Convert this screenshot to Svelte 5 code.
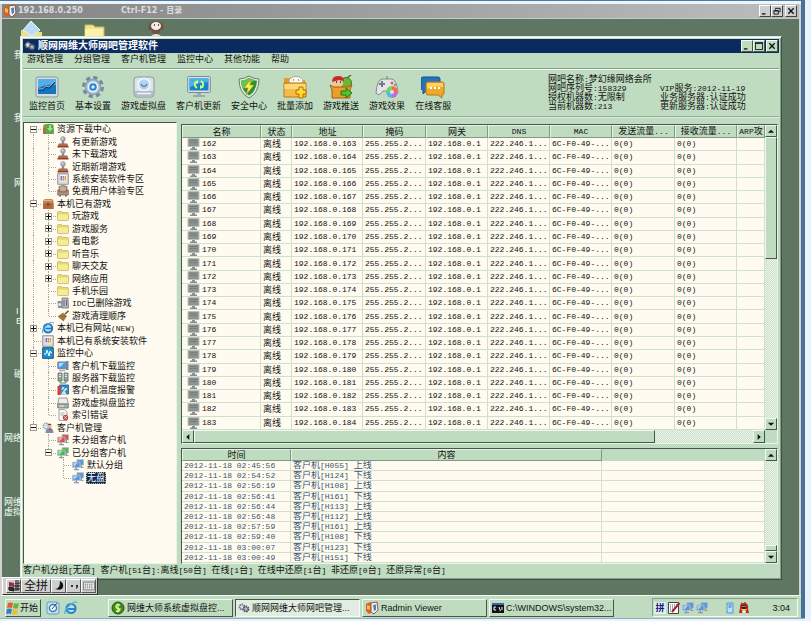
<script>
  const menus = ['游戏管理', '分组管理', '客户机管理', '监控中心', '其他功能', '帮助'];
  const tools = [
    ['chart', '监控首页'], ['gear', '基本设置'], ['disk', '游戏虚拟盘'], ['refresh', '客户机更新'],
    ['shield', '安全中心'], ['addbox', '批量添加'], ['push', '游戏推送'], ['pad', '游戏效果'], ['chat', '在线客服']
  ];
  // Guide codes: | line, T branch, L last branch, + closed, - open, ^ first open, = last open, _ blank
  const tree = [
    ['^', 'boxgreen', '资源下载中心'],
    ['|T', 'stamp', '有更新游戏'],
    ['|T', 'stamp', '未下载游戏'],
    ['|T', 'stamp', '近期新增游戏'],
    ['|T', 'soft', '系统安装软件专区'],
    ['|L', 'chair', '免费用户体验专区'],
    ['-', 'boxbrown', '本机已有游戏'],
    ['|+', 'folder', '玩游戏'],
    ['|+', 'folder', '游戏服务'],
    ['|+', 'folder', '看电影'],
    ['|+', 'folder', '听音乐'],
    ['|+', 'folder', '聊天交友'],
    ['|+', 'folder', '网络应用'],
    ['|T', 'folder', '手机乐园'],
    ['|T', 'trash', 'IDC已删除游戏'],
    ['|L', 'broom', '游戏清理顺序'],
    ['+', 'ie', '本机已有网站(NEW)'],
    ['T', 'soft', '本机已有系统安装软件'],
    ['-', 'wave', '监控中心'],
    ['|T', 'pc', '客户机下载监控'],
    ['|T', 'server', '服务器下载监控'],
    ['|T', 'alarm', '客户机温度报警'],
    ['|T', 'drive', '游戏虚拟盘监控'],
    ['|L', 'page', '索引错误'],
    ['=', 'users', '客户机管理'],
    ['_T', 'netred', '未分组客户机'],
    ['_=', 'netgreen', '已分组客户机'],
    ['__T', 'netblue', '默认分组'],
    ['__L', 'netblue', '无盘']
  ];
  const columns = ['名称', '状态', '地址', '掩码', '网关', 'DNS', 'MAC', '发送流量...', '接收流量...', 'ARP攻'];
  const widths = [79, 31, 71, 63, 62, 62, 62, 63, 62];
  const clients = Array.from({ length: 22 }, (_, i) => 162 + i);
  const logs = [
    ['2012-11-18 02:45:56', 'H055', '上线'],
    ['2012-11-18 02:54:52', 'H124', '下线'],
    ['2012-11-18 02:56:19', 'H108', '上线'],
    ['2012-11-18 02:56:41', 'H161', '下线'],
    ['2012-11-18 02:56:44', 'H113', '上线'],
    ['2012-11-18 02:56:48', 'H112', '上线'],
    ['2012-11-18 02:57:59', 'H161', '上线'],
    ['2012-11-18 02:59:40', 'H108', '下线'],
    ['2012-11-18 03:00:07', 'H123', '下线'],
    ['2012-11-18 03:00:49', 'H151', '下线']
  ];
  const desk = [
    [14, 48, '我'], [14, 111, '我'], [14, 176, '网'], [16, 304, 'I'], [16, 314, 'E'],
    [14, 367, '磁'], [4, 431, '网络'], [4, 495, '网维'], [4, 505, '虚拟']
  ];
  const runs = (s) => s.match(/[\x20-\x7e]+|[^\x20-\x7e]+/g) ?? [];
  let selected = $state('无盘');
</script>

{#snippet mix(s)}{#each runs(s) as r}{#if /^[\x20-\x7e]/.test(r)}<span class="m">{r}</span>{:else}{r}{/if}{/each}{/snippet}

{#snippet glyph(kind)}
  <svg class="g" viewBox="0 0 9 9" aria-hidden="true">
    {#if kind === 'min'}<path d="M1 7h4v1.5H1z" />
    {:else if kind === 'max'}<path d="M.5 1h8v7.5h-8z" fill="none" stroke="#111" /><path d="M0 .5h9V2H0z" />
    {:else if kind === 'restore'}<path d="M3 1.5h5v4H7M3 1v2M1 4h5v4H1zM1 4.5h5" fill="none" stroke="#111" />
    {:else if kind === 'close'}<path d="M1.5 1.5l6 6m0-6l-6 6" stroke="#111" stroke-width="1.5" />
    {:else if kind === 'up'}<path d="M1 6.500h7L4.500 3z" />
    {:else if kind === 'down'}<path d="M1 3h7L4.500 6.500z" />
    {:else if kind === 'left'}<path d="M6 1v7L2.500 4.500z" />
    {:else if kind === 'right'}<path d="M3 1v7l3.500-3.500z" />{/if}
  </svg>
{/snippet}

{#snippet small(kind)}
  <svg class="i12" viewBox="0 0 12 12" aria-hidden="true">
    {#if kind === 'folder'}
      <path d="M.5 2.500q0-1 1-1h3l1 1h5q1 0 1 1v6q0 1-1 1h-9q-1 0-1-1z" fill="#e6d66c" stroke="#c4b25a" stroke-width=".7" />
      <path d="M1 4.500h10V10H1z" fill="#f5ec98" />
    {:else if kind === 'stamp'}
      <circle cx="6" cy="3" r="2.300" fill="#a9afb6" stroke="#70757c" stroke-width=".6" /><circle cx="5.400" cy="2.400" r=".8" fill="#eef" />
      <path d="M5 5h2l.5 3h-3z" fill="#8c8c90" /><path d="M2 7.500h8l1 1v2H1v-2z" fill="#b5694b" /><path d="M.5 10h11v1.500H.5z" fill="#844530" />
    {:else if kind === 'soft'}
      <path d="M.7.7h10.600v10.600H.7z" fill="#dcdcdc" stroke="#95959b" /><path d="M3 2.200h6.500v6H3z" fill="#fff" />
      <path d="M3.500 3H5v4.500H3.500z" fill="#7c6cd0" /><path d="M5.500 3H7v2H5.500z" fill="#e0705c" /><path d="M5.500 5.500H7v2H5.500z" fill="#53a943" /><path d="M7.500 3H9v4.500H7.500z" fill="#cfa448" />
    {:else if kind === 'chair'}
      <path d="M2 1.500q4-2 8 0V7H2z" fill="#c7a996" stroke="#6f5a50" stroke-width=".7" />
      <path d="M.7 5h2v2h6.600V5h2v5H9.500v1.300h-1V10h-5v1.300h-1V10H.7z" fill="#b29382" stroke="#6f5a50" stroke-width=".7" />
    {:else if kind === 'boxgreen' || kind === 'boxbrown'}
      <path d="M1 4q0-3 3-3h5q2.500 0 2.500 3v7H1z" fill="#c78551" /><path d="M1 5h10.500v6H1z" fill="#b06a40" />
      {#if kind === 'boxgreen'}<path d="M3 2l4-1 4.500 1v8.500H4z" fill="#4fae48" /><path d="M5 5h2V2h2v3h2L8 8.500z" fill="#9de486" />
      {:else}<path d="M6 4.500v4M4.500 6.500h3.500" stroke="#7c3f22" /><path d="M2 2.500h8" stroke="#e5b289" />{/if}
    {:else if kind === 'trash'}
      <path d="M5 1h6l.5 10H5z" fill="#b5b8bc" stroke="#63676d" stroke-width=".7" /><path d="M7 3v6M9.500 3v6" stroke="#6c7077" />
      <path d="M.5 4H5v7H1z" fill="#8e9298" /><circle cx="2.800" cy="7.500" r="1.500" fill="#e4e6e9" />
    {:else if kind === 'broom'}
      <path d="M11.500.8L8 4" stroke="#7c5430" stroke-width="1.600" /><path d="M6 2.500L10 6 6.500 11.500.5 6.500z" fill="#a98350" /><path d="M2 7l4-2m-2.500 3.500L8 5m-3 5l4-4" stroke="#745129" stroke-width=".7" />
    {:else if kind === 'ie'}
      <circle cx="6" cy="6.300" r="4.200" fill="#b8e2fb" stroke="#2277bd" stroke-width="2" /><path d="M3.500 6.500h6.800" stroke="#2277bd" stroke-width="1.600" />
      <path d="M1 11Q-1 8 5 3t6.500-1.500" fill="none" stroke="#54a8dd" stroke-width="1.100" />
    {:else if kind === 'wave'}
      <path d="M.7.7h10.600v10.600H.7z" fill="#2190cf" stroke="#165078" /><path d="M2 7h2l1-4 2 6 1-5 1 2h1" fill="none" stroke="#e7fbff" />
    {:else if kind === 'pc'}
      <path d="M.8 2h8v6.500h-8z" fill="#4e9ae0" stroke="#7b8794" /><path d="M2 3h5l-4 4H2z" fill="#afdcff" /><path d="M9 1h2.500v9H9z" fill="#71879c" /><path d="M2 9.500h6.500v1.800H2z" fill="#aab2bb" />
    {:else if kind === 'server'}
      <path d="M1 1h4v8H1zM7 1h4v8H7z" fill="#96a09d" stroke="#555f5d" stroke-width=".7" /><path d="M2 2.500h2M2 4.500h2M8 2.500h2M8 4.500h2" stroke="#e7eee9" /><path d="M3 9v2h6V9" fill="none" stroke="#3c9560" />
    {:else if kind === 'alarm'}
      <path d="M2.500 1h9v9h-9z" fill="#2e90c7" stroke="#275b7c" stroke-width=".8" /><path d="M5 6l1-3 2 4 1-3 1 2" stroke="#fff" fill="none" stroke-width=".8" /><path d="M.5 2h3v9h-3z" fill="#d93d36" /><path d="M4 10l3-4 3 5z" fill="#e2ddd6" />
    {:else if kind === 'drive'}
      <path d="M2 1h8l1.300 6H.7z" fill="#eceeed" stroke="#7e8583" stroke-width=".8" /><path d="M.7 7h10.600v4H.7z" fill="#a6adaa" stroke="#6b7270" stroke-width=".8" /><path d="M2 9h5" stroke="#eee" />
    {:else if kind === 'page'}
      <path d="M2 .6h5.500L10 3v8.400H2z" fill="#fafafa" stroke="#8b8b8b" stroke-width=".8" /><path d="M3.500 4h4M3.500 6h3" stroke="#999" stroke-width=".8" /><circle cx="8.500" cy="8.500" r="2.700" fill="#c74747" /><path d="M7.400 7.400l2.200 2.200m0-2.200l-2.200 2.200" stroke="#fff" stroke-width=".8" />
    {:else if kind === 'users'}
      <circle cx="4" cy="4" r="3" fill="#d9e0e5" stroke="#76838e" stroke-dasharray="1.500 .8" /><circle cx="7.500" cy="4" r="2.200" fill="#e3b690" /><path d="M5.400 3q2-3 4.200 0" fill="#664430" /><path d="M3.500 11q0-5 4-5t4 5z" fill="#7991b5" /><path d="M7 6.500l1 4 1-4z" fill="#c7463f" />
    {:else}
      {@const c = kind === 'netred' ? '#d65350' : kind === 'netgreen' ? '#53b655' : '#5898d8'}
      <path d="M5 .7h6.500V6H5z" fill={c} stroke="#a9b6c2" stroke-width=".7" />
      <path d="M.5 3.200h7.500v5.300H.5z" fill={c} stroke="#b9c4ce" stroke-width=".8" /><path d="M1.500 4h4L2.500 7.500h-1z" fill="#fff" opacity=".55" />
      <path d="M3.500 8.500h1.500V10h2v1.300H2V10h1.500zM8.500 6h1.500v2h1.500v1H8.500z" fill="#8d99a4" />
    {/if}
  </svg>
{/snippet}

{#snippet big(kind)}
  <svg class="i24" viewBox="0 0 24 24" aria-hidden="true">
    {#if kind === 'chart'}
      <rect x="1" y="2" width="22" height="20" rx="2" fill="#d4dbe2" stroke="#8a97a3" /><path d="M3 4h18v15H3z" fill="#1775be" /><path d="M3 4h18v6Q12 8 3 13z" fill="#56aee4" /><path d="M4 15h4l3-3 3 1 6-6" fill="none" stroke="#083b62" stroke-width="1.500" /><path d="M4 14h4l3-3 3 1 6-6" fill="none" stroke="#d5f3ff" stroke-width=".6" />
    {:else if kind === 'gear'}
      <circle cx="12" cy="12" r="9" fill="none" stroke="#728aa4" stroke-width="4" stroke-dasharray="4 3.070" /><circle cx="12" cy="12" r="7.500" fill="#b9c8d7" stroke="#8ba0b6" stroke-width="1.500" /><circle cx="12" cy="12" r="4.500" fill="#2b83ce" stroke="#eef6fc" stroke-width="1.500" /><circle cx="12" cy="12" r="1.700" fill="#d7f0ff" />
    {:else if kind === 'disk'}
      <rect x="2" y="2" width="20" height="20" rx="3" fill="#dbe2ea" stroke="#8b97a5" /><path d="M2.500 16h19v4q0 1.500-2 1.500h-15q-2 0-2-1.500z" fill="#aebbc8" /><circle cx="12" cy="9.500" r="6" fill="#b7d3ee" stroke="#f7fafc" stroke-width="1.500" /><path d="M9 9q3 5 6 0" fill="none" stroke="#5795ca" stroke-width="1.500" /><path d="M5 18.500h14" stroke="#f4f6f8" stroke-width="1.500" />
    {:else if kind === 'refresh'}
      <rect x=".7" y="1.500" width="22.600" height="16" rx="1" fill="#dbe2e8" stroke="#7d8b96" /><path d="M2.500 3.500h19v12h-19z" fill="#1681cd" /><path d="M2.500 3.500h19v4q-9-1-19 5z" fill="#4ab1e9" /><path d="M10 13q-4-3-1-6M14 6q4 3 1 6" fill="none" stroke="#ccff73" stroke-width="2" /><path d="M7 7l4-2v4zM17 12l-4 2v-4z" fill="#ccff73" /><path d="M10 18h4v2h4v2H6v-2h4z" fill="#a0a9b0" />
    {:else if kind === 'shield'}
      <path d="M12 1q5 3 10 3 0 14-10 19Q2 18 2 4q5 0 10-3z" fill="#e2eadd" stroke="#6b7e66" /><path d="M12 3q4 2.500 8 2.800Q19.500 16 12 20.500 4.500 16 4 5.800 8 5.500 12 3z" fill="#289237" /><path d="M12 3Q8 5.500 4 5.800q0 4 2 8L18 5z" fill="#63c653" /><path d="M14 4l-7 9h4l-2 7 8-10h-4z" fill="#ffec4a" stroke="#b48a13" stroke-width=".6" />
    {:else if kind === 'addbox'}
      <path d="M1 4q0-1 1-1h6l2 2h12v17H1z" fill="#e39b28" /><ellipse cx="13" cy="6" rx="7" ry="4.500" fill="#fafaf0" stroke="#b7aa8b" /><path d="M10 5h1m4 0h1" stroke="#444" /><path d="M1 8h22v14H1z" fill="#f4bb48" stroke="#bb7917" /><path d="M1.500 9h21v5h-21z" fill="#ffd97e" /><path d="M16 12h4v3h3v4h-3v4h-4v-4h-3v-4h3z" fill="#ffdd28" stroke="#b76a0b" />
    {:else if kind === 'push'}
      <circle cx="17" cy="8" r="5.500" fill="#6eb637" stroke="#3d7a20" /><path d="M18 3l4-3" stroke="#3d7a20" stroke-width="1.500" /><circle cx="9" cy="8" r="5" fill="#f0c49d" /><path d="M3 7q0-6 6-6t6 5l-5-1z" fill="#ca2826" /><path d="M7 7h1m3 0h1" stroke="#222" stroke-width="1.500" /><path d="M1 10l4 2h14l4-2-2 5v8H3v-8z" fill="#ed9d2a" stroke="#a85f11" /><path d="M12 16h5v-3l6 5-6 5v-3h-5z" fill="#4ec52a" stroke="#23791a" />
    {:else if kind === 'pad'}
      <path d="M7 4h10q5 1 6 14-3 4-7-2H8q-4 6-7 2Q2 5 7 4z" fill="#e3e4e7" stroke="#85888e" /><path d="M12 1v3" stroke="#777" /><path d="M4 9h6M7 6v6" stroke="#777c85" stroke-width="2" /><circle cx="17" cy="8" r="1.500" fill="#cc676a" /><circle cx="20" cy="10" r="1.300" fill="#9297a2" /><circle cx="17" cy="17" r="6" fill="#f5e04b" /><path d="M17 17V11a6 6 0 0 1 6 6z" fill="#f26d58" /><path d="M17 17h6a6 6 0 0 1-6 6z" fill="#c36ddb" /><path d="M17 17v6a6 6 0 0 1-6-6z" fill="#53b6ee" /><path d="M17 17h-6a6 6 0 0 1 6-6z" fill="#71d45c" /><circle cx="17" cy="17" r="2" fill="#fff" opacity=".7" />
    {:else}
      <path d="M2 2h15q2 0 2 2v11H6l-4 4v-4q-2 0-2-2V4q0-2 2-2z" fill="#2473bd" stroke="#17528d" /><path d="M7 7h14q2 0 2 2v9q0 2-2 2v3l-4-3H7q-2 0-2-2V9q0-2 2-2z" fill="#efa927" stroke="#bd7713" /><path d="M6 8h16v4Q14 10 6 14z" fill="#ffd26a" /><path d="M9 13h2m2 0h2m2 0h2" stroke="#fff" stroke-width="2" />
    {/if}
  </svg>
{/snippet}

{#snippet radmin()}
  <svg class="i14" viewBox="0 0 14 14" aria-hidden="true"><path d="M1 3l4-2 2 2v8l-3 2-3-3z" fill="#d96027" /><path d="M6 2l6-1 1 8-4 4-3-2z" fill="#f3f3ed" stroke="#97543c" /><path d="M8 4l3-.5v5l-2 2z" fill="#4e81cc" /><path d="M2 4l3 1v4L2 8z" fill="#f6ba4c" /></svg>
{/snippet}

{#snippet gears()}
  <svg class="i12" viewBox="0 0 12 12" aria-hidden="true"><circle cx="4" cy="5" r="2.500" fill="#dde2e8" stroke="#69727c" stroke-width="1.800" stroke-dasharray="1.500 .7" /><circle cx="8" cy="7" r="2.500" fill="#aeb6bd" stroke="#49515a" stroke-width="1.800" stroke-dasharray="1.500 .7" /></svg>
{/snippet}

<div class="screen">
  <div class="frame">
    <div class="host"></div>
    <header class="outer-title">
      {@render radmin()}
      <span class="ip">192.168.0.250</span>
      <span>Ctrl-F12 - 目录</span>
      <div class="winbtns grey">
        <button aria-label="最小化">{@render glyph('min')}</button>
        <button aria-label="还原">{@render glyph('restore')}</button>
        <button class="gap" aria-label="关闭">{@render glyph('close')}</button>
      </div>
    </header>

    <main class="desktop">
      {#each desk as [x, y, label]}
        <span class="dlabel" style="left:{x - 2}px;top:{y - 18}px">{label}</span>
      {/each}
      <div class="dicons">
        <svg viewBox="0 0 24 18" aria-hidden="true"><path d="M1 10h6l2 2h13v8H1z" fill="#eadf8d" /><path d="M11 1l9 9-8 6-9-6z" fill="#b9dcf4" stroke="#e5f5ff" /></svg>
        <svg viewBox="0 0 24 18" aria-hidden="true"><path d="M3 5h8l2 2h9v12H3z" fill="#f1e48c" stroke="#c7b968" /><path d="M3 9h18v9H3z" fill="#fbf2a7" /></svg>
        <svg viewBox="0 0 24 18" aria-hidden="true"><path d="M4 8q1-7 8-7t8 7q-3 4-4 1 1 5-4 5t-4-5q-2 3-4-1z" fill="#76503f" /><ellipse cx="12" cy="6" rx="5" ry="4" fill="#f2eee8" /><path d="M10 5h1m3 0h1" stroke="#222" stroke-width="1.500" /><path d="M5 18q7-8 14 0z" fill="#e6ddd5" /></svg>
      </div>

      <section class="app" aria-label="网吧管理软件">
        <div class="title">
          {@render gears()}
          <h1>顺网网维大师网吧管理软件</h1>
          <div class="winbtns">
            <button aria-label="最小化">{@render glyph('min')}</button>
            <button aria-label="最大化">{@render glyph('max')}</button>
            <button class="gap1" aria-label="关闭">{@render glyph('close')}</button>
          </div>
        </div>
        <nav class="menu">
          {#each menus as m}<button>{m}</button>{/each}
        </nav>
        <div class="toolbar">
          <div class="tools">
            {#each tools as [icon, label]}
              <button>{@render big(icon)}<span>{label}</span></button>
            {/each}
          </div>
          <div class="info">
            <span>{@render mix('网吧名称:梦幻缘网络会所')}</span><span></span>
            <span>{@render mix('网吧序列号:158329')}</span><span>{@render mix('VIP服务:2012-11-19')}</span>
            <span>{@render mix('授权机器数:无限制')}</span><span>{@render mix('业务服务器:认证成功')}</span>
            <span>{@render mix('当前机器数:213')}</span><span>{@render mix('更新服务器:认证成功')}</span>
          </div>
        </div>

        <div class="body">
          <div class="pane treepane">
            <ul class="tree">
              {#each tree as [guides, icon, label]}
                <li>
                  {#each guides as g}
                    <i class="cell" class:up={!'_^'.includes(g)} class:dn={!'_L='.includes(g)} class:br={!'_|'.includes(g)}>
                      {#if '+-^='.includes(g)}<b class:plus={g === '+'}></b>{/if}
                    </i>
                  {/each}
                  {@render small(icon)}
                  <button class:sel={selected === label} onclick={() => (selected = label)}>{@render mix(label)}</button>
                </li>
              {/each}
            </ul>
          </div>

          <div class="right">
            <div class="pane grid">
              <div class="clip">
                <table class="clients">
                  <colgroup>{#each widths as w}<col style="width:{w}px" />{/each}<col /></colgroup>
                  <thead><tr>{#each columns as c}<th>{@render mix(c)}</th>{/each}</tr></thead>
                  <tbody>
                    {#each clients as n}
                      <tr>
                        <td class="name"><span><svg viewBox="0 0 13 12" aria-hidden="true"><path d="M1 .5h11v8H1z" fill="#8d9292" stroke="#b9bfbc" /><path d="M2.500 2.500h8m-8 2h8" stroke="#777d7d" /><path d="M5 9h3v1.500h2V12H3v-1.500h2z" fill="#8b908f" /></svg><span class="m">{n}</span></span></td>
                        <td>离线</td>
                        <td class="m">192.168.0.{n + 1}</td>
                        <td class="m">255.255.2...</td>
                        <td class="m">192.168.0.1</td>
                        <td class="m">222.246.1...</td>
                        <td class="m">6C-F0-49-...</td>
                        <td class="m">0(0)</td>
                        <td class="m">0(0)</td>
                        <td></td>
                      </tr>
                    {/each}
                  </tbody>
                </table>
              </div>
              <div class="vbar">
                <button aria-label="向上滚动">{@render glyph('up')}</button>
                <div class="thumb long"></div><div class="space"></div>
                <button aria-label="向下滚动">{@render glyph('down')}</button>
              </div>
              <div class="hbar">
                <button aria-label="向左滚动">{@render glyph('left')}</button>
                <div class="thumb wide"></div><div class="space"></div>
                <button aria-label="向右滚动">{@render glyph('right')}</button>
              </div>
            </div>

            <div class="pane log">
              <div class="clip">
                <table class="logs">
                  <colgroup><col class="c1" /><col class="c2" /><col /></colgroup>
                  <thead><tr><th>时间</th><th>内容</th><th class="blank"></th></tr></thead>
                  <tbody>
                    {#each logs as [t, host, act]}
                      <tr><td class="m">{t}</td><td>{@render mix(`客户机[${host}] ${act}`)}</td><td></td></tr>
                    {/each}
                  </tbody>
                </table>
              </div>
              <div class="vbar">
                <button aria-label="向上滚动">{@render glyph('up')}</button>
                <div class="space"></div><div class="thumb tiny"></div>
                <button aria-label="向下滚动">{@render glyph('down')}</button>
              </div>
            </div>
          </div>
        </div>
        <footer class="status">{@render mix('客户机分组[无盘] 客户机[51台]:离线[50台] 在线[1台] 在线中还原[1台] 非还原[0台] 还原异常[0台]')}</footer>
      </section>

      <div class="ime">
        <button aria-label="输入法"><svg viewBox="0 0 12 12" aria-hidden="true"><path d="M1 2l5 1v4L1 6z" fill="#9c2845" /><path d="M1 7l5 1v3L1 10zM7 1h4M7 3h5M8 3v8m2-8v8M6 6h6M7 9h5" stroke="#111" fill="#333" /></svg></button>
        <button class="mode">全拼</button>
        <button aria-label="半角"><svg viewBox="0 0 12 12" aria-hidden="true"><path d="M7 1q4 2 3 6T2 9q5 0 5-8z" fill="#111" /></svg></button>
        <button aria-label="中文标点"><svg viewBox="0 0 12 12" aria-hidden="true"><circle cx="4" cy="6" r="1" /><path d="M8 5h2q0 3-2 4 1-2 0-4z" /></svg></button>
        <button aria-label="软键盘"><svg viewBox="0 0 14 12" aria-hidden="true"><path d="M.5 1.500h13v9H.5z" fill="#e6e6e6" stroke="#777" /><path d="M2 4h10M2 6h10M2 8h10" stroke="#777" stroke-dasharray="1.500 1" /></svg></button>
      </div>
    </main>

    <footer class="taskbar">
      <button class="start">
        <svg class="i14" viewBox="0 0 14 14" aria-hidden="true"><path d="M2 2q3-1 5 0L6 7Q4 6 1 7z" fill="#e65a2e" /><path d="M8 2q3 1 5 0l-1 5q-2 1-5 0z" fill="#67b53c" /><path d="M1 8q3-1 5 0l-1 5q-2-1-5 0z" fill="#3f79cf" /><path d="M7 8q3 1 5 0l-1 5q-2 1-5 0z" fill="#f0bd32" /></svg>
        <span>开始</span>
      </button>
      <div class="quick">
        <svg viewBox="0 0 14 14" aria-hidden="true"><rect x="1" y="1" width="12" height="12" rx="2" fill="#c4e4f5" stroke="#5f9fc4" /><circle cx="7" cy="7" r="3.500" fill="#fff" stroke="#3c7eae" stroke-width="1.500" /><path d="M6 8l5-6" stroke="#345" /></svg>
        <svg viewBox="0 0 14 14" aria-hidden="true"><circle cx="7" cy="7.500" r="4.500" fill="#bce3f7" stroke="#2a86c4" stroke-width="2.200" /><path d="M4 8h8" stroke="#2a86c4" stroke-width="2" /><path d="M1 13Q0 9 6 4t7-2" fill="none" stroke="#5aaede" stroke-width="1.300" /></svg>
      </div>
      <div class="tasks">
        <button><svg class="i14" viewBox="0 0 14 14" aria-hidden="true"><circle cx="7" cy="7" r="6" fill="#3f8c23" stroke="#234c18" /><path d="M9 4q-4-1-4 1.500T9 8q0 3-4 2M7 2.500v9" fill="none" stroke="#e2ff8a" stroke-width="1.300" /></svg><span>网维大师系统虚拟盘控...</span></button>
        <button class="active">{@render gears()}<span>顺网网维大师网吧管理...</span></button>
        <button>{@render radmin()}<span>Radmin Viewer</span></button>
        <button><svg class="i12" viewBox="0 0 12 12" aria-hidden="true"><path d="M0 1h12v10H0z" fill="#111" /><path d="M0 1h12v2H0z" fill="#3567b7" /><path d="M4 5H2v3h2m1-3v.1m0 2.900v-.1M7 5l1.500 4M10 5v3" stroke="#fff" fill="none" /></svg><span>C:\WINDOWS\system32...</span></button>
      </div>
      <div class="tray">
        <span class="pin">拼</span>
        <svg viewBox="0 0 12 12" aria-hidden="true"><path d="M.5.500h10v11H.5z" fill="#fff" stroke="#444" /><path d="M2 3h7M2 5h7M2 7h5M2 9h4" stroke="#555" stroke-dasharray="1 1" /><path d="M11.500 1L4 10" stroke="#a4202d" stroke-width="2" /></svg>
        {@render small('netblue')}
        {@render small('netblue')}
        <svg class="far" viewBox="0 0 12 12" aria-hidden="true"><path d="M3 1h6v10H3z" fill="#b9defa" stroke="#5294cc" /><path d="M4.500 3h3M4.500 5h3" stroke="#3377b2" /></svg>
        <svg viewBox="0 0 12 12" aria-hidden="true"><path d="M2 6Q2 2 4 0q0 2 2 1 1-2 2 0 3 2 2 6l1 4H1z" fill="#bd2a1d" /><ellipse cx="6" cy="5" rx="2.500" ry="2" fill="#222" /><path d="M4.500 4.500h1m1 0h1" stroke="#fff" /><path d="M3 7h6v1H3z" fill="#f7bc25" /><ellipse cx="6" cy="9.500" rx="2" ry="1.500" fill="#fff" /></svg>
        <time>3:04</time>
      </div>
    </footer>
  </div>
</div>

<style>
  :global(body) { background: #e9f3fc; }
  .screen, .screen :global(*) { box-sizing: border-box; }
  .screen {
    height: 100vh; padding: 0 6px 3px 0; background: #e9f3fc; color: #111; overflow: hidden;
    font: 9px/12px "Liberation Sans", "Noto Sans CJK SC", sans-serif; white-space: nowrap;
  }
  .m { font-family: "Liberation Mono", monospace; font-size: 8px; white-space: pre; }
  button { font: inherit; color: inherit; border: 0; padding: 0; margin: 0; background: none; white-space: nowrap; }
  svg { display: block; flex: none; }
  .i12 { width: 12px; height: 12px; }
  .i14 { width: 14px; height: 14px; }
  .i24 { width: 24px; height: 24px; }
  .g { width: 8px; height: 8px; fill: #111; }

  .frame { height: 100%; display: flex; flex-direction: column; border-right: 4px solid #486e99; background: #d2d2d0; box-shadow: 0 1px #9aabbb; }
  .host { height: 4px; border-top: 1px solid #4c79ad; background: #eef3f6; flex: none; }
  .outer-title {
    display: flex; align-items: center; height: 14px; margin: 0 2px; padding: 0 2px 0 1px; flex: none;
    color: #dedede; font-family: "DejaVu Sans", "Noto Sans CJK SC", sans-serif; font-size: 8px; font-weight: bold;
    background: linear-gradient(90deg, #858585, #bdbdbd); gap: 1px;
  }
  .ip { width: 102px; }
  .winbtns { display: flex; margin-left: auto; }
  .winbtns button {
    width: 12px; height: 12px; display: grid; place-items: center; background: #c0dcc0;
    border: 1px solid; border-color: #f6fff6 #46564a #46564a #f6fff6;
  }
  .grey button { background: #cecece; border-color: #fff #444 #444 #fff; }
  .winbtns .gap { margin-left: 2px; }
  .winbtns .gap1 { margin-left: 1px; }

  .desktop { position: relative; flex: 1; min-height: 0; margin: 0 2px; background: #5f7762; border-top: 1px solid #c3ccc0; overflow: hidden; }
  .dlabel { position: absolute; color: #f4fff4; }
  .dicons { display: flex; gap: 38px; padding: 1px 0 0 18px; }
  .dicons svg { width: 24px; height: 18px; }

  .app {
    position: absolute; inset: 17px 17px 15px 18px; display: flex; flex-direction: column;
    background: #c0dcc0; border: 1px solid; border-color: #d9ecd9 #3e5242 #3e5242 #d9ecd9;
    box-shadow: inset 1px 1px #fff, inset -1px -1px #86a088; padding: 2px;
  }
  .title { display: flex; align-items: center; gap: 2px; height: 14px; padding: 0 1px; background: #0a2a60; color: #fff; flex: none; }
  h1 { font-size: 10px; line-height: 14px; margin: 0; font-weight: bold; }
  .menu { display: flex; gap: 11px; padding: 0 4px 3px; border-bottom: 1px solid #86a088; box-shadow: 0 1px #f6fff6; flex: none; }
  .toolbar { display: flex; height: 48px; padding: 6px 0 0 6px; border-bottom: 1px solid #94ae94; box-shadow: 0 1px #d9ecd9; flex: none; }
  .tools { display: flex; gap: 10px; }
  .tools button { display: flex; flex-direction: column; align-items: center; justify-content: space-between; height: 37px; }
  .info { margin: 0 0 0 auto; display: grid; grid-template-columns: 112px 119px; line-height: 9px; grid-auto-rows: 9px; }

  .body { flex: 1; min-height: 0; display: flex; gap: 4px; padding-top: 5px; }
  .pane { background: #fffbf0; border: 1px solid; border-color: #46564a #e9f5e9 #e9f5e9 #46564a; overflow: hidden; }
  .treepane { width: 154px; flex: none; }
  .tree { list-style: none; margin: 0; padding: 0 0 0 2px; height: 82%; display: grid; grid-auto-rows: 1fr; }
  .tree li { display: flex; align-items: center; min-height: 0; }
  .tree .i12 { margin: 0 2px 0 1px; }
  .tree button { padding: 0 1px; line-height: 12px; }
  .tree .sel { background: #0a2a60; color: #fff; outline: 1px dotted #d9b25c; outline-offset: -1px; }
  .cell { position: relative; width: 15px; height: 100%; flex: none; display: grid; place-items: center; }
  .cell::before { content: ""; position: absolute; left: 7px; top: 50%; bottom: 50%; border-left: 1px dotted #a8a8a0; }
  .cell.up::before { top: 0; }
  .cell.dn::before { bottom: 0; }
  .cell.br::after { content: ""; position: absolute; left: 8px; right: 0; top: 50%; border-top: 1px dotted #a8a8a0; }
  .cell b { position: relative; z-index: 1; width: 7px; height: 7px; border: 1px solid #9a9a94; background: linear-gradient(#111, #111) center / 5px 1px no-repeat #fffbf0; }
  .cell b.plus { background: linear-gradient(#111, #111) center / 5px 1px no-repeat, linear-gradient(#111, #111) center / 1px 5px no-repeat #fffbf0; }

  .right { flex: 1; min-width: 0; display: flex; flex-direction: column; gap: 4px; padding: 2px 1px 0 0; }
  .grid { flex: 1; min-height: 0; display: grid; grid-template: minmax(0, 1fr) 13px / minmax(0, 1fr) 12px; background: #c0dcc0; }
  .log { height: 116px; flex: none; display: grid; grid-template: minmax(0, 1fr) / minmax(0, 1fr) 12px; }
  .clip { overflow: hidden; background: #fffbf0; }
  table { width: 100%; height: 100%; table-layout: fixed; border-collapse: separate; border-spacing: 0; }
  th {
    height: 12px; padding: 0; font-weight: normal; line-height: 10px; background: #c0dcc0; overflow: hidden;
    border: 1px solid; border-color: #e4f3e4 #7f987f #7f987f #e4f3e4;
  }
  th.blank { border-color: #c0dcc0; }
  td { padding: 0 0 0 2px; overflow: hidden; line-height: 9px; border-right: 1px solid #cfe0cb; border-bottom: 1px solid #cfe0cb; }
  .clients td { line-height: 12px; }
  .name > span { display: flex; align-items: center; gap: 2px; padding-left: 3px; }
  .name svg { width: 13px; height: 12px; }
  .logs { color: #3b5570; }
  .logs th { color: #111; }
  .c1 { width: 109px; }
  .c2 { width: 311px; }

  .vbar { display: flex; flex-direction: column; }
  .hbar { display: flex; }
  .vbar, .hbar { background: repeating-conic-gradient(#c9dfc9 0 25%, #f0f5ea 0 50%) 0 0 / 2px 2px; }
  .vbar button, .hbar button, .thumb {
    background: #c0dcc0; border: 1px solid; border-color: #f0faf0 #46564a #46564a #f0faf0; flex: none;
  }
  .vbar button, .hbar button { width: 12px; height: 12px; display: grid; place-items: center; }
  .hbar button { height: 13px; }
  .space { flex: 1; }
  .long { height: 40%; }
  .wide { width: 79%; }
  .tiny { height: 6px; }

  .status { height: 13px; line-height: 13px; flex: none; }

  .ime { position: absolute; left: 0; bottom: 0; display: flex; padding: 1px 1px 1px 3px; background: #cfcfcf; border: 1px solid; border-color: #fff #333 #333 #fff; }
  .ime button { width: 15px; height: 14px; display: grid; place-items: center; border: 1px solid; border-color: #fff #555 #555 #fff; background: #cfcfcf; }
  .ime svg { width: 12px; height: 12px; }
  .ime .mode { width: 30px; font-size: 12px; line-height: 12px; }

  .taskbar { display: flex; align-items: center; height: 23px; flex: none; padding: 1px 3px 0 4px; margin-left: 1px; background: #c0dcc0; border-top: 1px solid #f2fbf2; }
  .taskbar button { display: flex; align-items: center; gap: 2px; height: 18px; padding: 0 2px; border: 1px solid; border-color: #f2fbf2 #46564a #46564a #f2fbf2; overflow: hidden; }
  .taskbar .start { gap: 0; padding: 0; width: 36px; }
  .quick { display: flex; gap: 4px; padding-left: 5px; margin-right: 30px; }
  .quick svg { width: 14px; height: 14px; }
  .tasks { display: flex; gap: 2px; flex: 1; }
  .tasks button { width: 125px; }
  .tasks .active { background: #e1ede0; border-color: #46564a #f2fbf2 #f2fbf2 #46564a; }
  .tray { display: flex; align-items: center; gap: 2px; width: 146px; height: 19px; padding: 0 7px 0 1px; border: 1px solid; border-color: #86a088 #f2fbf2 #f2fbf2 #86a088; }
  .tray svg { width: 12px; height: 12px; }
  .tray .far { margin-left: 14px; }
  .pin { width: 12px; text-align: center; background: #e4ecf4; color: #10207c; font-weight: bold; }
  time { margin-left: auto; }
</style>
